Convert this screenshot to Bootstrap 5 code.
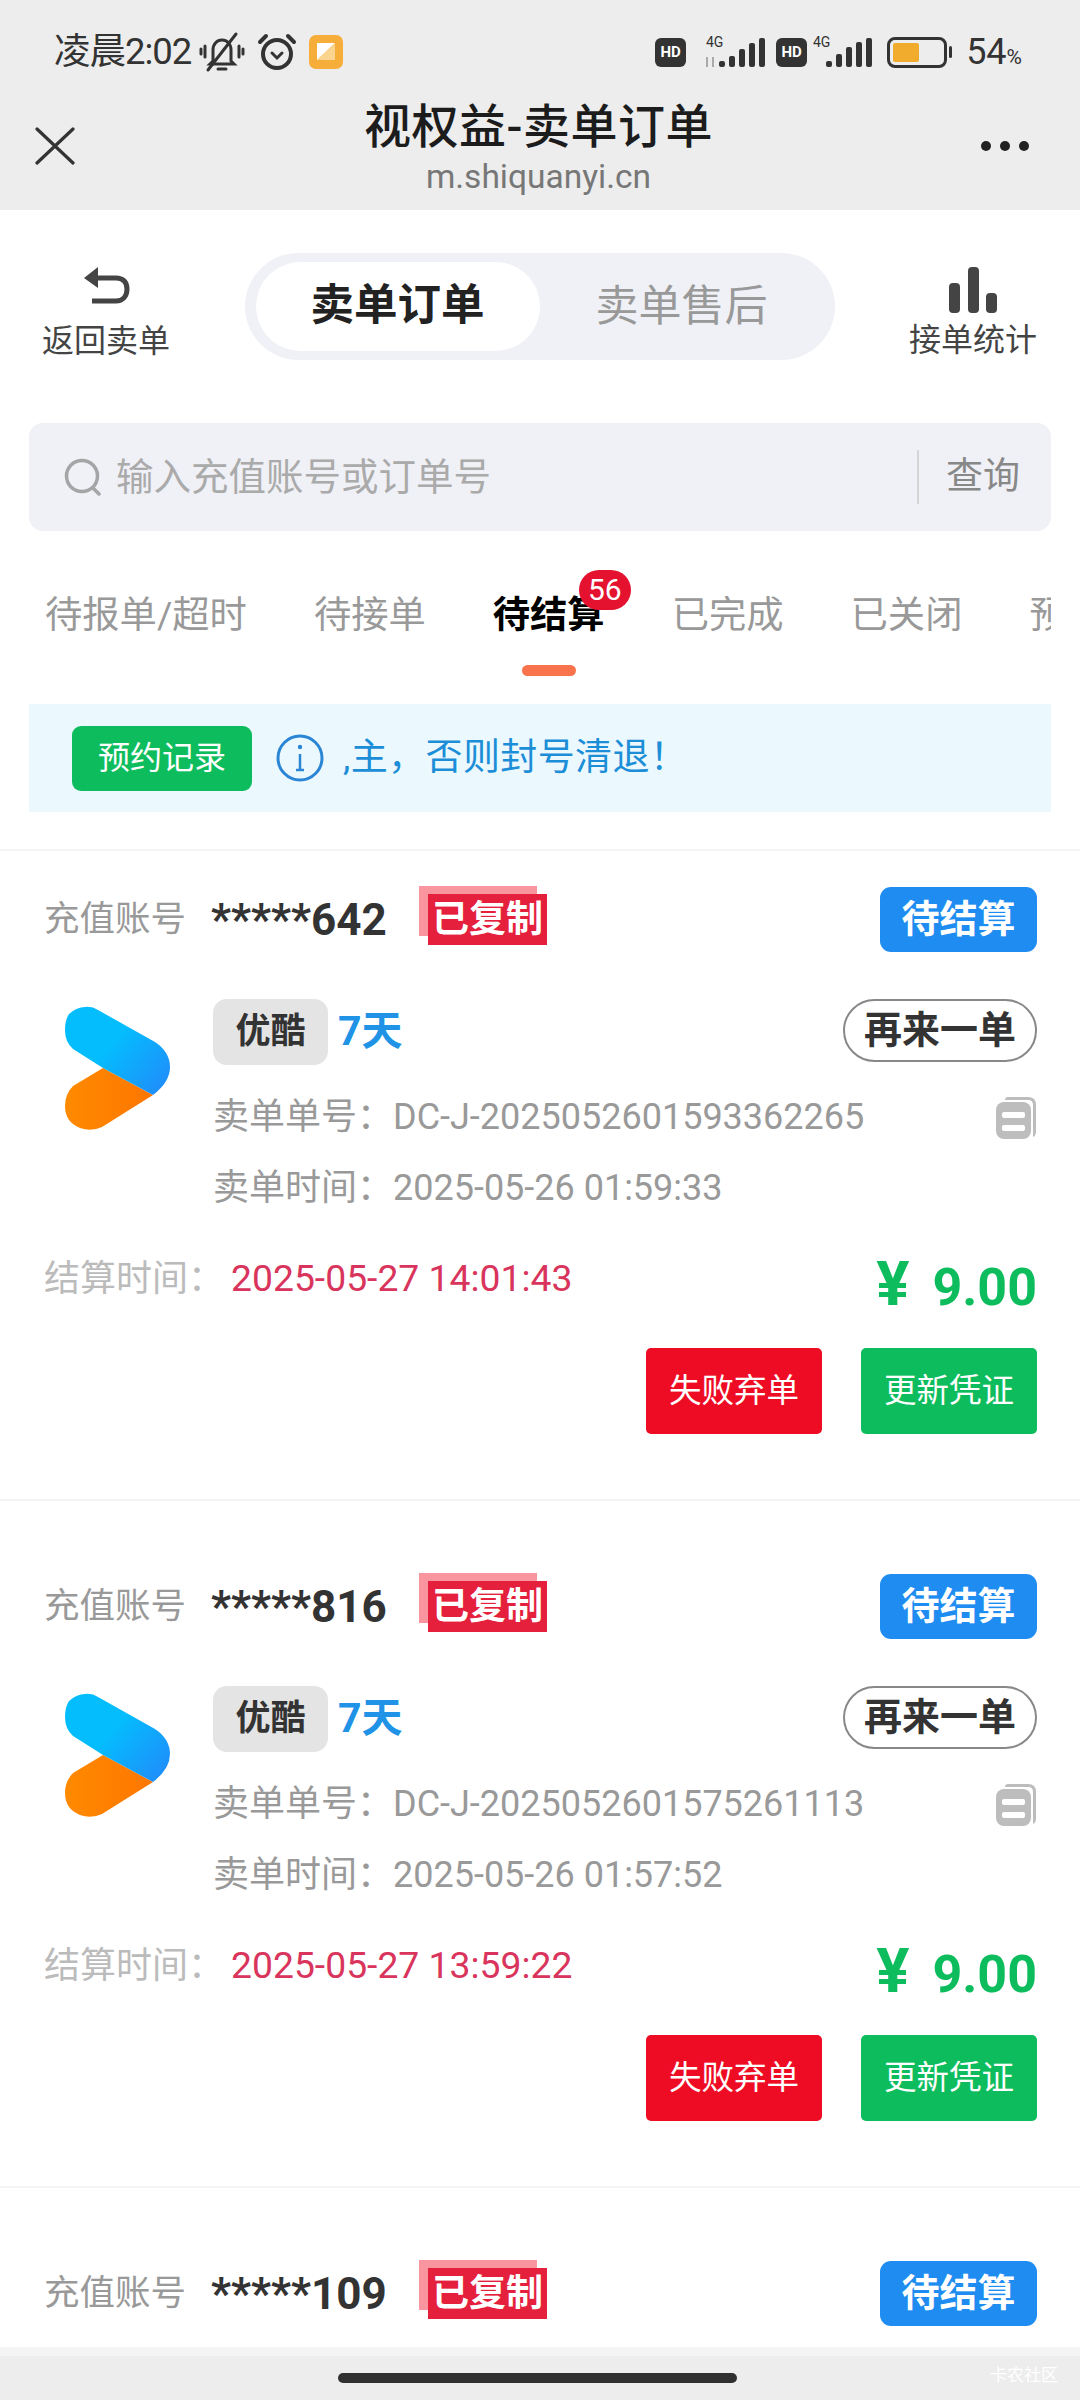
<!DOCTYPE html>
<html lang="zh-CN">
<head>
  <meta charset="UTF-8">
  <meta name="viewport" content="width=device-width, initial-scale=1">
  <title>视权益-卖单订单</title>
  <link href="https://cdn.jsdelivr.net/npm/bootstrap@5.3.3/dist/css/bootstrap.min.css" rel="stylesheet">
  <style>
    body {
      font-family: Roboto, "Noto Sans CJK SC", sans-serif;
      background: #fff;
      color: #333;
    }
    .app-shell { height: 2400px; overflow: hidden; }
    .app-body { min-height: 0; overflow: hidden; }

    /* top bar */
    .top-head { background: #ededed; height: 210px; flex: none; }
    .status-row { height: 104px; padding: 0 58px 0 54px; color: #333; }
    .status-time { font-size: 36.5px; line-height: 1; letter-spacing: -1px; }
    .status-pct { font-size: 36px; line-height: 1; margin-left: 14px; }
    .status-pct small { font-size: 21px; }
    .status-gap { margin-left: 12px; }
    .hd-tag {
      width: 31px; height: 29px; border-radius: 6px; background: #333; color: #fff;
      font-size: 15px; font-weight: 700; line-height: 29px; text-align: center;
    }
    .sig-one { margin-left: 17px; }
    .sig-two { margin-left: 5px; }
    .hd-two { margin-left: 10px; }
    .batt {
      width: 60px; height: 31px; border: 3px solid #333; border-radius: 8px; padding: 3px; margin-left: 15px;
    }
    .batt-fill { width: 26px; height: 100%; background: #f2ac2d; border-radius: 2px; }
    .batt-tip { width: 3px; height: 12px; background: #333; margin-left: 2px; border-radius: 2px; }
    .title-row { padding: 0 50px 0 35px; height: 90px; }
    .title-side { margin-bottom: 6px; }
    .title-close { margin-right: 22px; }
    .page-title { font-size: 47px; line-height: 48px; font-weight: 500; color: #1c1c1c; letter-spacing: .5px; }
    .page-url { font-size: 33.5px; line-height: 36px; margin-top: 8px; color: #777; }

    /* tool row */
    .tool-row { padding: 42px 45px 0 44px; }
    .tool-item { width: 124px; color: #444; font-size: 32px; line-height: 38px; padding-top: 14px; }
    .seg-box { width: 590px; height: 107px; background: #f0f1f6; border-radius: 54px; padding: 9px 11px; }
    .seg-on {
      width: 284px; background: #fff; border-radius: 45px;
      font-size: 43.5px; font-weight: 700; color: #222;
    }
    .seg-off { font-size: 43px; color: #999; }

    /* search */
    .search-box {
      margin: 63px 29px 0; height: 108px; background: #f0f1f6; border-radius: 14px;
      padding: 0 31px 0 35px;
    }
    .search-hint { font-size: 37.5px; color: #aaa; margin-left: 14px; }
    .search-line { width: 2px; height: 54px; background: #d5d5d8; margin-right: 27px; }
    .search-go { font-size: 37px; color: #888; }

    /* tabs: the row clips the last tab, so the badge needs room above the text */
    .tab-row { margin: 31px 29px 0; padding: 30px 0 0 16px; gap: 67px; overflow: hidden; }
    .tab-item { font-size: 37.3px; line-height: 46px; color: #999; white-space: nowrap; flex: none; }
    .tab-item.is-on { color: #000; font-weight: 700; }
    .tab-mark { width: 54px; height: 11px; background: #f9744d; border-radius: 6px; margin-top: 27px; }
    .tab-count {
      position: absolute; top: -22px; left: 86px; width: 52px; height: 40px; padding: 0;
      background: #e4122f; border-radius: 20px; font-size: 30px; line-height: 40px; font-weight: 400;
    }

    /* notice */
    .notice-bar { margin: 28px 29px 0; height: 108px; background: #ebf8fe; padding: 0 20px 0 43px; }
    .notice-btn { width: 180px; height: 65px; background: #0dbd5d; color: #fff; border-radius: 9px; font-size: 32px; flex: none; }
    .notice-text { font-size: 37px; color: #1c8ed8; margin-left: 19px; letter-spacing: .4px; }

    /* order list */
    .order-list { margin-top: 37px; border-top: 2px solid #f4f4f4; }
    .order-item { padding: 36px 43px 65px 44px; border-bottom: 2px solid #f4f4f4; }
    .order-item + .order-item { margin-top: 37px; }
    .order-item.is-cut { padding-bottom: 0; border-bottom: 0; }
    .head-row { height: 65px; }
    .acct-label { font-size: 35.5px; color: #999; width: 167px; }
    .acct-no { font-size: 44px; font-weight: 700; color: #333; width: 208px; line-height: 1; }
    .copied-stamp { width: 128px; height: 59px; margin-bottom: 8px; }
    .copied-back { position: absolute; left: 0; top: 0; width: 118px; height: 50px; background: #f9959f; }
    .copied-front {
      position: absolute; left: 9px; top: 8px; width: 119px; height: 51px; background: #e4203c; color: #fff;
      font-size: 37px; line-height: 51px; font-weight: 700; text-align: center; white-space: nowrap;
    }
    .state-btn {
      width: 157px; height: 65px; background: #1e8cf0; color: #fff; border-radius: 11px;
      font-size: 38px; font-weight: 700;
    }
    .goods-row { margin-top: 47px; }
    .goods-logo { width: 105px; height: 126px; margin: 7px 43px 0 21px; flex: none; }
    .goods-tag { width: 115px; height: 66px; background: #e4e4e4; border-radius: 14px; font-size: 35px; font-weight: 700; color: #333; }
    .goods-days { font-size: 41px; font-weight: 700; color: #2093e6; margin-left: 10px; }
    .again-btn {
      width: 194px; height: 63px; border: 2px solid #888; border-radius: 32px; background: #fff;
      font-size: 38px; font-weight: 700; color: #333;
    }
    .goods-lines { margin-top: 16px; }
    .goods-line { height: 71px; font-size: 36px; color: #999; white-space: nowrap; }
    .price-row { margin-top: 32px; }
    .settle-label { font-size: 36px; line-height: 46px; color: #bbb; }
    .settle-time { font-size: 37.3px; line-height: 46px; color: #d9345c; margin-left: 7px; }
    .price-num { font-size: 52px; line-height: 62px; font-weight: 700; color: #0dbd5d; margin-top: -2px; }
    .price-unit { font-size: 62px; margin-right: 23px; }
    .action-row { margin-top: 29px; gap: 39px; }
    .action-btn { width: 176px; height: 86px; color: #fff; border-radius: 5px; font-size: 32.5px; }
    .action-red { background: #ee0c25; }
    .action-green { background: #0dbd5d; }

    /* bottom bar */
    .home-bar { height: 53px; background: #ededed; border-top: 9px solid #f4f4f4; flex: none; }
    .home-pill { width: 399px; height: 10px; background: #303030; border-radius: 5px; margin: 17px 5px 0 0; }
    .water-mark { position: absolute; right: 22px; top: 7px; font-size: 17px; color: #fff; }
  </style>
</head>
<body>

<div class="app-shell d-flex flex-column">
  <div class="app-body flex-grow-1">

    <header class="top-head">
      <div class="status-row d-flex align-items-center">
        <span class="status-time">凌晨2:02</span>
        <svg class="ms-2" width="46" height="46" viewBox="0 0 46 46" fill="none" stroke="#333" stroke-width="3" stroke-linecap="round">
          <path d="M14 32V21c0-6 4-10 9-10s9 4 9 10v11l3 3H11z"/>
          <path d="M19 40h8M6 17v11M2 20v5M40 17v11M44 20v5M9 41 37 5"/>
        </svg>
        <svg class="status-gap" width="40" height="40" viewBox="0 0 40 40" fill="none" stroke="#333" stroke-linecap="round">
          <circle cx="20" cy="22" r="14" stroke-width="4"/>
          <path d="M15 21l5 5 5-5" stroke-width="3"/>
          <path d="M3 10 9 4M37 10l-6-6" stroke-width="4"/>
        </svg>
        <svg class="status-gap" width="34" height="34" viewBox="0 0 34 34">
          <rect width="34" height="34" rx="7" fill="#f7ad3a"/>
          <path d="M8 8h18L8 25z" fill="#fff"/>
          <path d="M8 25 26 8v17z" fill="#fbd58f"/>
        </svg>
        <div class="ms-auto d-flex align-items-center">
          <div class="hd-tag">HD</div>
          <svg class="sig-one" width="63" height="34" viewBox="0 0 63 34">
            <text x="3" y="12" font-size="14" font-family="Roboto" fill="#333">4G</text>
            <path d="M4 22v10M10 32V22" stroke="#aaa" stroke-width="2"/>
            <g fill="#333">
              <rect x="16" y="26" width="6" height="6" rx="2"/>
              <rect x="26" y="21" width="6" height="11" rx="2"/>
              <rect x="36" y="14" width="6" height="18" rx="2"/>
              <rect x="46" y="8" width="6" height="24" rx="2"/>
              <rect x="56" y="3" width="6" height="29" rx="2"/>
            </g>
          </svg>
          <div class="hd-tag hd-two">HD</div>
          <svg class="sig-two" width="60" height="34" viewBox="0 0 60 34">
            <text x="1" y="12" font-size="14" font-family="Roboto" fill="#333">4G</text>
            <g fill="#333">
              <rect x="14" y="26" width="6" height="6" rx="2"/>
              <rect x="24" y="19" width="6" height="13" rx="2"/>
              <rect x="34" y="12" width="6" height="20" rx="2"/>
              <rect x="44" y="7" width="6" height="25" rx="2"/>
              <rect x="54" y="3" width="6" height="29" rx="2"/>
            </g>
          </svg>
          <div class="batt"><div class="batt-fill"></div></div>
          <div class="batt-tip"></div>
          <span class="status-pct">54<small>%</small></span>
        </div>
      </div>
      <div class="title-row d-flex align-items-center justify-content-between">
        <svg class="title-side title-close" width="40" height="38" viewBox="0 0 40 38" stroke="#333" stroke-width="3.2" stroke-linecap="round">
          <path d="M2 2l36 34M38 2 2 36"/>
        </svg>
        <div class="text-center">
          <div class="page-title">视权益-卖单订单</div>
          <div class="page-url">m.shiquanyi.cn</div>
        </div>
        <svg class="title-side" width="50" height="12" viewBox="0 0 50 12" fill="#222">
          <circle cx="6" cy="6" r="5"/><circle cx="25" cy="6" r="5"/><circle cx="44" cy="6" r="5"/>
        </svg>
      </div>
    </header>

    <div class="tool-row d-flex align-items-center justify-content-between">
      <div class="tool-item d-flex flex-column align-items-center">
        <svg width="48" height="40" viewBox="0 0 48 40" fill="none" stroke="#444" stroke-width="5">
          <path d="M14 12h20c7 0 11 4 11 11s-4 12-11 12H10"/>
          <path d="M16 1 2 12l14 10z" fill="#444" stroke="none"/>
        </svg>
        <span class="mt-3 text-nowrap">返回卖单</span>
      </div>
      <div class="seg-box d-flex">
        <div class="seg-on d-flex align-items-center justify-content-center">卖单订单</div>
        <div class="seg-off flex-grow-1 d-flex align-items-center justify-content-center">卖单售后</div>
      </div>
      <div class="tool-item d-flex flex-column align-items-center">
        <svg width="48" height="46" viewBox="0 0 48 46" fill="#444">
          <rect x="0" y="16" width="11" height="30" rx="4"/>
          <rect x="19" y="0" width="11" height="46" rx="4"/>
          <rect x="37" y="26" width="11" height="20" rx="4"/>
        </svg>
        <span class="mt-2 text-nowrap">接单统计</span>
      </div>
    </div>

    <div class="search-box d-flex align-items-center">
      <svg width="38" height="38" viewBox="0 0 38 38" fill="none" stroke="#a5a5a8" stroke-width="3.5" stroke-linecap="round">
        <circle cx="18" cy="18" r="15.5"/><path d="M29 30l6 6"/>
      </svg>
      <span class="search-hint">输入充值账号或订单号</span>
      <div class="search-line ms-auto"></div>
      <span class="search-go">查询</span>
    </div>

    <div class="tab-row d-flex">
      <div class="tab-item">待报单/超时</div>
      <div class="tab-item">待接单</div>
      <div class="tab-item is-on position-relative d-flex flex-column align-items-center">
        待结算
        <span class="badge tab-count">56</span>
        <div class="tab-mark"></div>
      </div>
      <div class="tab-item">已完成</div>
      <div class="tab-item">已关闭</div>
      <div class="tab-item">预约</div>
    </div>

    <div class="notice-bar d-flex align-items-center">
      <div class="notice-btn d-flex align-items-center justify-content-center">预约记录</div>
      <svg class="ms-4" width="48" height="48" viewBox="0 0 48 48" fill="none" stroke="#2a86d4">
        <circle cx="24" cy="24" r="22" stroke-width="3"/>
        <path d="M24 20v15M20 36h8" stroke-width="2.5"/>
        <circle cx="24" cy="13" r="2.2" fill="#2a86d4" stroke="none"/>
      </svg>
      <span class="notice-text">,主，否则封号清退！</span>
    </div>

    <div class="order-list" id="orderList"></div>
  </div>

  <footer class="home-bar position-relative d-flex justify-content-center">
    <div class="home-pill"></div>
    <span class="water-mark">卡农社区</span>
  </footer>
</div>

<script>
  // last order is cut off by the bottom bar, only its head row is on screen
  const orders = [
    { acct: '*****642', no: 'DC-J-2025052601593362265', sold: '2025-05-26 01:59:33', settle: '2025-05-27 14:01:43' },
    { acct: '*****816', no: 'DC-J-2025052601575261113', sold: '2025-05-26 01:57:52', settle: '2025-05-27 13:59:22' },
    { acct: '*****109' }
  ];

  const logo = `
    <svg class="goods-logo" viewBox="0 0 105 126">
      <defs>
        <linearGradient id="logoBlue" x1="0.45" y1="0.4" x2="1" y2="0.8">
          <stop offset="0" stop-color="#04bdfd"/><stop offset="1" stop-color="#1e90fb"/>
        </linearGradient>
        <linearGradient id="logoOrange" x1="0" y1="0.5" x2="1" y2="0.5">
          <stop offset="0" stop-color="#ff8a00"/><stop offset="1" stop-color="#fe7600"/>
        </linearGradient>
      </defs>
      <path d="M38 62 88 89 37 121Q26 126 15 122 0 116 0 100 0 88 8 80Z" fill="url(#logoOrange)"/>
      <path d="M4 8Q12 1 20 1 27 0 33 4L90 36Q105 46 105 61 105 76 88 89L38 62 8 43Q0 36 0 24 0 14 4 8Z" fill="url(#logoBlue)"/>
    </svg>`;

  const copyIcon = `
    <svg class="ms-auto" width="41" height="44" viewBox="0 0 41 44">
      <path d="M12 2h20q8 0 8 8v26q0 5-3 6V10q0-5-5-5H9q0-3 3-3z" fill="#bdbdbd"/>
      <rect x="0" y="7" width="35" height="37" rx="8" fill="#bdbdbd"/>
      <rect x="6" y="17" width="23" height="6" rx="2" fill="#fff"/>
      <rect x="6" y="30" width="23" height="6" rx="2" fill="#fff"/>
    </svg>`;

  function orderBody(o) {
    return `
      <div class="goods-row d-flex">
        ${logo}
        <div class="flex-grow-1">
          <div class="d-flex align-items-start">
            <div class="goods-tag d-flex align-items-center justify-content-center">优酷</div>
            <span class="goods-days align-self-center">7天</span>
            <button type="button" class="btn again-btn d-flex align-items-center justify-content-center p-0 ms-auto">再来一单</button>
          </div>
          <div class="goods-lines">
            <div class="goods-line d-flex align-items-center">卖单单号：${o.no}${copyIcon}</div>
            <div class="goods-line d-flex align-items-center">卖单时间：${o.sold}</div>
          </div>
        </div>
      </div>
      <div class="price-row d-flex justify-content-between">
        <div><span class="settle-label">结算时间：</span><span class="settle-time">${o.settle}</span></div>
        <div class="price-num"><span class="price-unit">¥</span>9.00</div>
      </div>
      <div class="action-row d-flex justify-content-end">
        <button type="button" class="btn action-btn action-red d-flex align-items-center justify-content-center p-0">失败弃单</button>
        <button type="button" class="btn action-btn action-green d-flex align-items-center justify-content-center p-0">更新凭证</button>
      </div>`;
  }

  document.getElementById('orderList').innerHTML = orders.map(o => `
    <div class="order-item ${o.no ? '' : 'is-cut'}">
      <div class="head-row d-flex align-items-center">
        <span class="acct-label">充值账号</span>
        <span class="acct-no">${o.acct}</span>
        <div class="copied-stamp position-relative">
          <div class="copied-back"></div>
          <div class="copied-front">已复制</div>
        </div>
        <button type="button" class="btn state-btn d-flex align-items-center justify-content-center p-0 ms-auto">待结算</button>
      </div>
      ${o.no ? orderBody(o) : ''}
    </div>`).join('');
</script>

<script src="https://cdn.jsdelivr.net/npm/bootstrap@5.3.3/dist/js/bootstrap.bundle.min.js"></script>

</body>
</html>
